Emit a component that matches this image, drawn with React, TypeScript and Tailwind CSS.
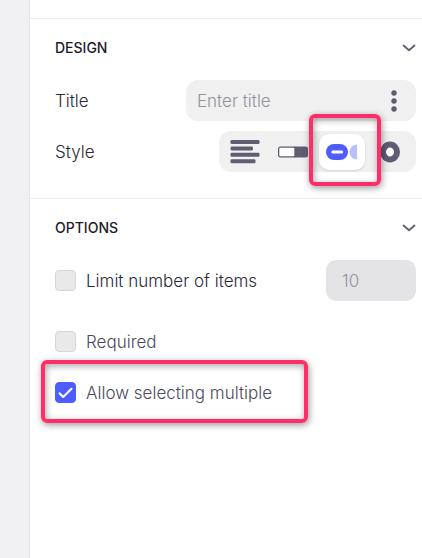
import { useState } from "react";
import type { ReactNode } from "react";

function Chevron() {
  return (
    <svg width="14" height="8" viewBox="0 0 14 8" fill="none" aria-hidden="true">
      <path d="M1.500 1.500 7 6.300l5.500-4.800" stroke="#5f5d70" strokeWidth="1.800" strokeLinecap="round" strokeLinejoin="round" />
    </svg>
  );
}

function ListIcon() {
  return (
    <svg width="30" height="24" viewBox="0 0 30 24" fill="#5f5d70" aria-hidden="true">
      <rect x="0.500" y="0" width="29" height="4" rx="1.300" />
      <rect x="0.500" y="6.400" width="22.500" height="4" rx="1.300" />
      <rect x="0.500" y="12.800" width="29" height="4" rx="1.300" />
      <rect x="0.500" y="19.200" width="25" height="4" rx="1.300" />
    </svg>
  );
}

function BarIcon() {
  return (
    <svg width="30" height="12" viewBox="0 0 30 12" aria-hidden="true">
      <rect x="0" y="0.500" width="30" height="11" rx="2.500" fill="#5f5d70" />
      <rect x="1.300" y="1.800" width="15" height="8.400" rx="1" fill="#fff" />
    </svg>
  );
}

function PillIcon() {
  return (
    <svg width="32" height="16" viewBox="0 0 32 16" aria-hidden="true">
      <rect x="0" y="0" width="22" height="16" rx="8" fill="#4f5dff" />
      <rect x="5.500" y="6.600" width="11.500" height="2.800" rx="1.200" fill="#fff" />
      <path d="M31 0.500v15a7.500 7.500 0 0 1 0-15Z" fill="#b9beff" />
    </svg>
  );
}

function RingIcon() {
  return (
    <svg width="20" height="22" viewBox="0 0 20 22" aria-hidden="true">
      <ellipse cx="10" cy="11" rx="7" ry="7.500" fill="#fff" stroke="#5f5d70" strokeWidth="6" />
    </svg>
  );
}

const frame =
  "pointer-events-none absolute z-10 rounded-md border-4 border-[#ff2e68] shadow-[1px_2px_7px_rgba(0,0,0,0.4),inset_1px_2px_7px_rgba(0,0,0,0.35)]";

function Section({ title, children }: { title: string; children: ReactNode }) {
  return (
    <section className="border-t border-[#ececee] pb-[26px] pl-[25px] pr-1.5">
      <button type="button" className="mb-1 flex h-[57px] w-full items-center justify-between text-left">
        <h2 className="text-sm font-medium text-[#1c1b2b]">{title}</h2>
        <Chevron />
      </button>
      {children}
    </section>
  );
}

type CheckProps = { label: string; tone: string; checked: boolean; onChange: (value: boolean) => void };

function Check({ label, tone, checked, onChange }: CheckProps) {
  return (
    <label className={`flex h-[41px] items-center gap-2.5 ${tone}`}>
      <span className="grid size-[21px] place-items-center">
        <input
          type="checkbox"
          checked={checked}
          onChange={(e) => onChange(e.target.checked)}
          className="col-start-1 row-start-1 size-[21px] appearance-none rounded border border-[#d6d6d8] bg-[#e9e9ea] checked:border-[#4f5dff] checked:bg-[#4f5dff]"
        />
        {checked && (
          <svg className="pointer-events-none col-start-1 row-start-1" width="15" height="12" viewBox="0 0 15 12" fill="none" aria-hidden="true">
            <path d="m1.500 6.300 3.700 3.700 8.300-8.300" stroke="#fff" strokeWidth="2" strokeLinecap="round" strokeLinejoin="round" />
          </svg>
        )}
      </span>
      {label}
    </label>
  );
}

const styles = [
  { name: "List", icon: <ListIcon /> },
  { name: "Bar", icon: <BarIcon /> },
  { name: "Pills", icon: <PillIcon /> },
  { name: "Radio", icon: <RingIcon /> },
];

export default function App() {
  const [style, setStyle] = useState("Pills");
  const [limit, setLimit] = useState(false);
  const [required, setRequired] = useState(false);
  const [multiple, setMultiple] = useState(true);

  return (
    <div className="flex min-h-screen bg-white font-['Inter',sans-serif] text-[17px] font-light leading-6 text-[#2b2a3a]">
      <aside className="w-[30px] shrink-0 border-r border-[#e6e6e8] bg-[#f0f0f2]" />
      <main className="min-w-0 flex-1 pt-[18px]">
        <Section title="DESIGN">
          <div className="flex flex-col gap-2.5">
            <div className="flex items-center justify-between">
              <label htmlFor="title">Title</label>
              <div className="flex h-[41px] w-[230px] items-center rounded-xl bg-[#f0f0f0] pl-[11px] pr-3">
                <input id="title" placeholder="Enter title" className="min-w-0 flex-1 bg-transparent outline-none placeholder:text-[#93929d]" />
                <button type="button" aria-label="More">
                  <svg width="20" height="22" viewBox="0 0 20 22" fill="#5f5d70" aria-hidden="true">
                    <circle cx="10" cy="3" r="2.700" />
                    <circle cx="10" cy="11" r="2.700" />
                    <circle cx="10" cy="19" r="2.700" />
                  </svg>
                </button>
              </div>
            </div>
            <div className="flex items-center justify-between">
              <span id="style">Style</span>
              <div role="group" aria-labelledby="style" className="flex h-[41px] w-[197px] items-center justify-between rounded-xl bg-[#f0f0f0] px-[3px]">
                {styles.map(({ name, icon }) => (
                  <div key={name} className="relative">
                    <button
                      type="button"
                      aria-label={name}
                      aria-pressed={style === name}
                      onClick={() => setStyle(name)}
                      className="flex h-9 w-[46px] items-center justify-center rounded-[10px] aria-pressed:bg-white aria-pressed:shadow-sm"
                    >
                      {icon}
                    </button>
                    {name === "Pills" && <div className={`${frame} -bottom-4 -left-2.5 -right-4 -top-5`} />}
                  </div>
                ))}
              </div>
            </div>
          </div>
        </Section>
        <Section title="OPTIONS">
          <div className="flex items-center justify-between">
            <Check label="Limit number of items" tone="text-[#2b2a3a]" checked={limit} onChange={setLimit} />
            <input aria-label="Item limit" defaultValue="10" disabled className="h-[41px] w-[90px] rounded-[10px] bg-[#e4e4e6] px-4 text-[#93929d]" />
          </div>
          <div className="mt-5 flex flex-col items-start gap-2.5">
            <Check label="Required" tone="text-[#4b4a5a]" checked={required} onChange={setRequired} />
            <div className="relative">
              <Check label="Allow selecting multiple" tone="text-[#4b4a5a]" checked={multiple} onChange={setMultiple} />
              <div className={`${frame} -bottom-2.5 -left-3.5 -right-9 -top-3`} />
            </div>
          </div>
        </Section>
      </main>
    </div>
  );
}
